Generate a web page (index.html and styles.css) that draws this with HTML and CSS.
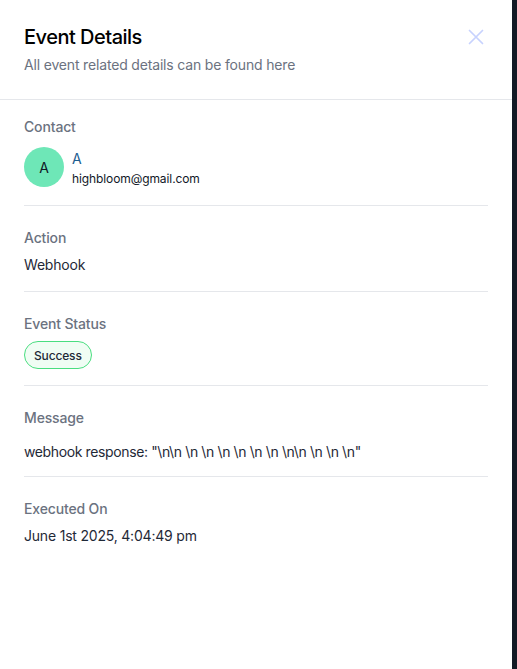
FILE: index.html
```html
<!DOCTYPE html>
<html>
<head>
<meta charset="utf-8">
<link rel="stylesheet" href="styles.css">
</head>
<body>
<div class="page">
  <aside class="panel">
    <header class="head">
      <div class="head-text">
        <h1 class="title">Event Details</h1>
        <p class="subtitle">All event related details can be found here</p>
      </div>
      <button class="close" aria-label="Close">
        <svg width="16" height="16" viewBox="0 0 16 16" fill="none" stroke="#c7d2fe" stroke-width="1.7" stroke-linecap="round"><path d="M1.5 1.5 L14.5 14.5 M14.5 1.5 L1.5 14.5"/></svg>
      </button>
    </header>
    <div class="body">
      <section class="sec sec-first">
        <div class="label">Contact</div>
        <div class="contact">
          <div class="avatar">A</div>
          <div class="contact-info">
            <div class="name">A</div>
            <div class="email">highbloom@gmail.com</div>
          </div>
        </div>
      </section>
      <section class="sec">
        <div class="label">Action</div>
        <div class="value">Webhook</div>
      </section>
      <section class="sec">
        <div class="label">Event Status</div>
        <div class="badge-row"><span class="badge">Success</span></div>
      </section>
      <section class="sec sec-msg">
        <div class="label">Message</div>
        <div class="value msg">webhook response: "\n\n \n \n \n \n \n \n \n\n \n \n \n"</div>
      </section>
      <section class="sec sec-last">
        <div class="label">Executed On</div>
        <div class="value">June 1st 2025, 4:04:49 pm</div>
      </section>
    </div>
  </aside>
  <div class="backdrop"></div>
</div>
</body>
</html>
```
FILE: styles.css
```css
* { box-sizing: border-box; }
html, body { margin: 0; padding: 0; height: 100%; }
body {
  font-family: Inter, "Noto Sans", sans-serif;
  background: #111827;
  color: #111827;
}
.page {
  display: flex;
  height: 669px;
}
.panel {
  width: 512px;
  background: #ffffff;
  height: 100%;
  flex-shrink: 0;
}
.backdrop {
  flex: 1;
  background: #131a25;
}
.head {
  display: flex;
  justify-content: space-between;
  align-items: flex-start;
  padding: 25px 28px 0 24px;
  height: 100px;
  border-bottom: 1px solid #e5e7eb;
}
.title {
  margin: 0;
  font-size: 20px;
  line-height: 24px;
  font-weight: 500;
  letter-spacing: -0.5px;
  color: #000000;
}
.subtitle {
  margin: 6px 0 0;
  font-size: 14px;
  line-height: 20px;
  letter-spacing: -0.17px;
  color: #6b7280;
}
.close {
  border: 0;
  background: none;
  padding: 0;
  margin-top: 4px;
  width: 16px;
  height: 16px;
  display: flex;
  cursor: pointer;
}
.body {
  padding: 0 24px;
}
.sec {
  padding: 22px 0 16px;
  border-bottom: 1px solid #e5e7eb;
}
.sec-first { padding-top: 17px; padding-bottom: 18px; }
.sec-msg { padding-bottom: 14px; }
.sec-last { border-bottom: 0; }
.label {
  font-size: 14px;
  line-height: 20px;
  font-weight: 500;
  letter-spacing: -0.15px;
  color: #6b7280;
}
.value {
  margin-top: 7px;
  font-size: 14px;
  line-height: 20px;
  letter-spacing: -0.2px;
  color: #1f2937;
}
.value.msg { margin-top: 14px; letter-spacing: -0.38px; }
.contact {
  display: flex;
  align-items: flex-start;
  gap: 8px;
  margin-top: 10px;
  height: 40px;
}
.avatar {
  width: 40px;
  height: 40px;
  border-radius: 50%;
  background: #6ee7b7;
  display: flex;
  align-items: center;
  justify-content: center;
  font-size: 14px;
  color: #111827;
}
.contact-info {
  display: flex;
  flex-direction: column;
  padding-top: 3px;
}
.name {
  font-size: 14px;
  line-height: 18px;
  color: #1d5d8f;
}
.email {
  margin-top: 3px;
  font-size: 12px;
  line-height: 16px;
  letter-spacing: -0.1px;
  color: #111827;
}
.badge-row {
  margin-top: 7px;
  display: flex;
}
.badge {
  display: inline-flex;
  align-items: center;
  height: 28px;
  padding: 0 9px;
  border: 1px solid #4ade80;
  border-radius: 14px;
  background: #f0fdf4;
  font-size: 12px;
  letter-spacing: -0.15px;
  color: #1f2937;
  font-weight: 500;
}
```
